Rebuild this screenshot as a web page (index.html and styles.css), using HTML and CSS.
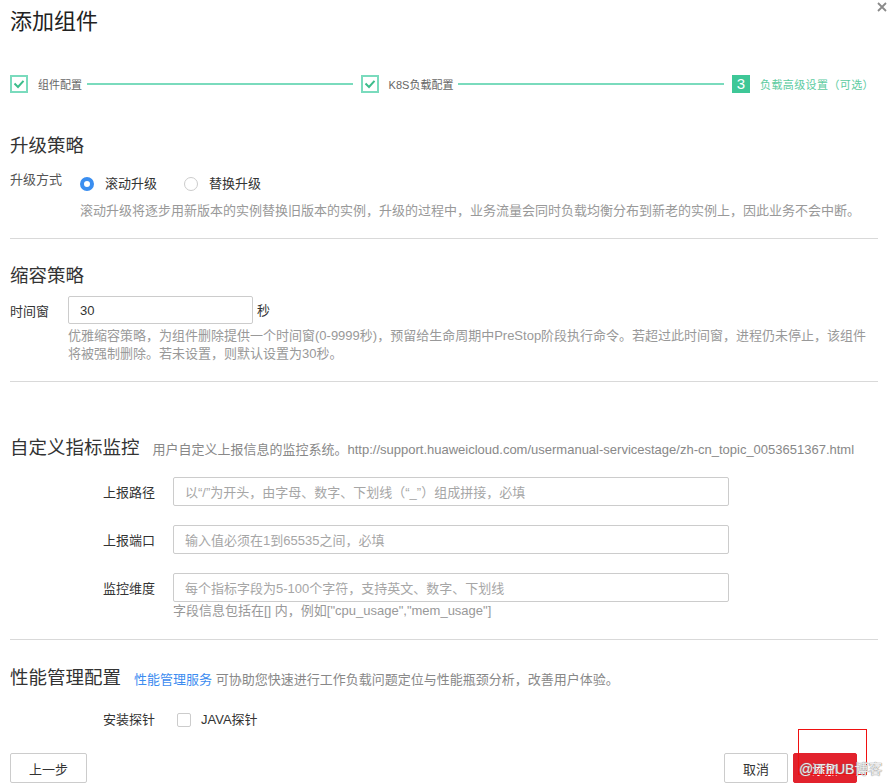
FILE: index.html
```html
<!DOCTYPE html>
<html lang="zh-CN">
<head>
<meta charset="utf-8">
<title>添加组件</title>
<link rel="stylesheet" href="styles.css">
</head>
<body>
<div class="dialog">
  <svg class="close" width="10" height="10" viewBox="0 0 10 10"><path d="M1 1L9 9M9 1L1 9" stroke="#8a8a8a" stroke-width="1.8"/></svg>
  <h1 class="title">添加组件</h1>

  <div class="steps">
    <div class="step done">
      <span class="step-box"><svg width="12" height="10" viewBox="0 0 12 10"><path d="M1.5 4.5L5 8L10.5 1.8" fill="none" stroke="#3dbd8c" stroke-width="2"/></svg></span>
      <span class="step-text">组件配置</span>
    </div>
    <div class="step-line"></div>
    <div class="step done">
      <span class="step-box"><svg width="12" height="10" viewBox="0 0 12 10"><path d="M1.5 4.5L5 8L10.5 1.8" fill="none" stroke="#3dbd8c" stroke-width="2"/></svg></span>
      <span class="step-text">K8S负载配置</span>
    </div>
    <div class="step-line"></div>
    <div class="step active">
      <span class="step-box num">3</span>
      <span class="step-text">负载高级设置（可选）</span>
    </div>
  </div>

  <section class="sec sec-upgrade">
    <h2 class="sec-title">升级策略</h2>
    <div class="row-upgrade">
      <span class="lbl-upgrade">升级方式</span>
      <div class="radios">
        <label class="radio"><span class="radio-dot checked"></span>滚动升级</label>
        <label class="radio"><span class="radio-dot"></span>替换升级</label>
      </div>
    </div>
    <p class="help help-upgrade">滚动升级将逐步用新版本的实例替换旧版本的实例，升级的过程中，业务流量会同时负载均衡分布到新老的实例上，因此业务不会中断。</p>
  </section>
  <hr class="divider d1">

  <section class="sec sec-scale">
    <h2 class="sec-title">缩容策略</h2>
    <div class="row-window">
      <span class="lbl-window">时间窗</span>
      <div class="input small"><span class="val">30</span></div>
      <span class="unit">秒</span>
    </div>
    <p class="help help-window">优雅缩容策略，为组件删除提供一个时间窗(0-9999秒)，预留给生命周期中PreStop阶段执行命令。若超过此时间窗，进程仍未停止，该组件<br>将被强制删除。若未设置，则默认设置为30秒。</p>
  </section>
  <hr class="divider d2">

  <section class="sec sec-metric">
    <div class="title-line">
      <h2 class="sec-title">自定义指标监控</h2>
      <span class="desc">用户自定义上报信息的监控系统。http://support.huaweicloud.com/usermanual-servicestage/zh-cn_topic_0053651367.html</span>
    </div>
    <div class="form-row first">
      <span class="flabel">上报路径</span>
      <div class="input wide"><span class="ph">以“/”为开头，由字母、数字、下划线（“_”）组成拼接，必填</span></div>
    </div>
    <div class="form-row">
      <span class="flabel">上报端口</span>
      <div class="input wide"><span class="ph">输入值必须在1到65535之间，必填</span></div>
    </div>
    <div class="form-row">
      <span class="flabel">监控维度</span>
      <div class="input wide"><span class="ph">每个指标字段为5-100个字符，支持英文、数字、下划线</span></div>
    </div>
    <p class="help help-dim">字段信息包括在[] 内，例如["cpu_usage","mem_usage"]</p>
  </section>
  <hr class="divider d3">

  <section class="sec sec-apm">
    <div class="title-line">
      <h2 class="sec-title">性能管理配置</h2>
      <span class="desc"><a class="link">性能管理服务</a> 可协助您快速进行工作负载问题定位与性能瓶颈分析，改善用户体验。</span>
    </div>
    <div class="probe-row">
      <span class="flabel">安装探针</span>
      <label class="check"><span class="check-box"></span>JAVA探针</label>
    </div>
  </section>

  <div class="footer">
    <button class="btn">上一步</button>
    <div class="right-btns">
      <button class="btn btn-cancel">取消</button>
      <button class="btn btn-primary">添加</button>
    </div>
  </div>

  <div class="annot"></div>
  <div class="watermark">@ITPUB博客</div>
</div>
</body>
</html>
```

FILE: styles.css
```css
* { box-sizing: border-box; }
html, body { margin: 0; padding: 0; background: #fff; }
body {
  font-family: "Liberation Sans", "Noto Sans CJK SC", sans-serif;
  font-size: 13px;
  color: #333;
  width: 890px;
  height: 784px;
  overflow: hidden;
}
.dialog {
  position: relative;
  height: 784px;
  padding: 0 12px 0 10px;
}
.close { position: absolute; top: 2px; right: 3px; }
.title {
  margin: 0;
  padding-top: 7px;
  font-size: 22px;
  line-height: 30px;
  font-weight: normal;
  color: #222;
}

/* steps */
.steps {
  display: flex;
  align-items: center;
  height: 18px;
  margin-top: 38px;
}
.step { display: flex; align-items: center; }
.step-box {
  width: 18px; height: 18px;
  border: 2px solid #7adbbd;
  display: flex; align-items: center; justify-content: center;
  background: #fff;
}
.step-box.num {
  background: #3ec797;
  border-color: #3ec797;
  color: #fff;
  font-size: 15px;
  line-height: 18px;
}
.step-text {
  margin-left: 10px;
  font-size: 11px;
  color: #666;
}
.step.active .step-text { color: #5ccb9f; margin-right: 4px; letter-spacing: 0.4px; }
.step-line {
  flex: 1;
  height: 2px;
  background: #7adbbd;
  margin: 0 8px 0 5px;
}

/* sections */
.sec-title {
  margin: 0;
  font-size: 18.5px;
  line-height: 24px;
  font-weight: normal;
  color: #333;
}
.sec-upgrade { margin-top: 41px; }
.help {
  margin: 0;
  color: #999;
  font-size: 13px;
}
.row-upgrade { display: flex; align-items: flex-start; margin-top: 12px; }
.lbl-upgrade { width: 70px; line-height: 20px; color: #555; }
.radios { display: flex; padding-top: 4px; line-height: 20px; }
.radio { display: flex; align-items: center; color: #333; margin-right: 27px; }
.radio-dot {
  width: 14px; height: 14px; border-radius: 50%;
  border: 1px solid #ccc;
  margin-right: 11px;
  background: #fff;
}
.radio-dot.checked { border: 4px solid #3a8ef0; }
.help-upgrade { margin-left: 70px; margin-top: 7px; line-height: 20px; }

.divider { border: 0; border-top: 1px solid #d9d9d9; margin: 0; height: 0; }
.d1 { margin-top: 17px; }
.sec-scale { margin-top: 25px; }
.row-window { display: flex; align-items: center; margin-top: 8px; }
.lbl-window { width: 58px; color: #333; }
.input {
  height: 28px;
  border: 1px solid #ccc;
  border-radius: 2px;
  display: flex; align-items: center;
  padding-left: 11px;
  background: #fff;
}
.input.small { width: 185px; }
.val { color: #333; font-size: 13px; }
.unit { margin-left: 4px; margin-top: -2px; }
.help-window { margin-left: 58px; margin-top: 3px; line-height: 18px; }
.d2 { margin-top: 18px; }

.sec-metric { margin-top: 54px; }
.title-line { display: flex; align-items: baseline; }
.desc { margin-left: 13px; color: #888; font-size: 13px; white-space: nowrap; }
.form-row { display: flex; align-items: center; margin-top: 19px; }
.form-row.first { margin-top: 17px; }
.flabel { width: 145px; text-align: right; margin-right: 18px; color: #333; }
.input.wide { width: 556px; height: 29px; }
.ph { color: #a6a6a6; white-space: nowrap; }
.help-dim { margin-left: 163px; line-height: 18px; color: #999; }
.d3 { margin-top: 19px; }

.sec-apm { margin-top: 26px; }
.link { color: #3c8cf0; text-decoration: none; }
.probe-row { display: flex; align-items: center; margin-top: 20px; line-height: 20px; }
.check { display: flex; align-items: center; margin-left: 4px; color: #333; }
.check-box {
  width: 14px; height: 14px;
  border: 1px solid #ccc;
  border-radius: 2px;
  margin-right: 10px;
}

.footer {
  display: flex;
  justify-content: space-between;
  margin-top: 23px;
}
.right-btns { display: flex; gap: 5px; margin-right: 21px; }
.btn {
  height: 30px;
  font-family: inherit;
  font-size: 13px;
  color: #333;
  background: #fff;
  border: 1px solid #ccc;
  border-radius: 2px;
  width: 77px;
  padding: 0;
}
.btn-cancel { width: 64px; }
.btn-primary { width: 64px; background: #e2222d; border-color: #e2222d; color: #fff; }

.annot {
  position: absolute;
  left: 798px; top: 729px;
  width: 69px; height: 46px;
  border: 1px solid #f01010;
}
.watermark {
  position: absolute;
  left: 799px; top: 760px;
  font-size: 14px;
  line-height: 18px;
  color: rgba(255,255,255,0.85);
  text-shadow: 0 0 1px #888, 0 0 1px #888;
  white-space: nowrap;
}
```
